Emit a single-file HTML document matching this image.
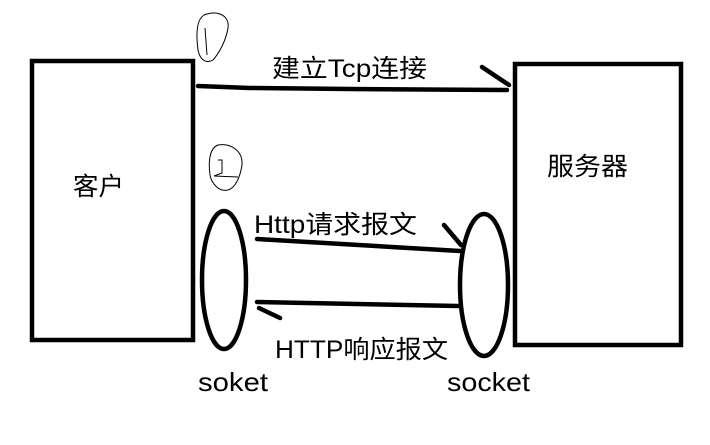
<!DOCTYPE html>
<html><head><meta charset="utf-8"><style>
html,body{margin:0;padding:0;background:#fff;width:710px;height:445px;overflow:hidden}
svg{display:block}
text{font-family:"Liberation Sans","Noto Sans CJK SC",sans-serif;fill:#000}
</style></head><body>
<svg width="710" height="445" viewBox="0 0 710 445">
<g fill="none" stroke="#000" stroke-width="4.5" stroke-linecap="round">
<rect x="32" y="61" width="161" height="279" stroke-linecap="butt"/>
<rect x="515" y="64" width="166" height="281" stroke-linecap="butt"/>
<path d="M198 86 L250 88 L350 89 L507 90"/>
<path d="M482 67 L509 85"/>
<ellipse cx="224" cy="280" rx="22" ry="69"/>
<ellipse cx="484" cy="285" rx="24" ry="71"/>
<path d="M257 239 L460 251"/>
<path d="M444 225 L461 245"/>
<path d="M257 302 L458 306"/>
<path d="M259 308 L280 318"/>
</g>
<g fill="none" stroke="#000" stroke-width="1">
<path d="M204 15 C215 10 230 14 228 28 C226 40 220 52 213 60 C206 64 200 60 198 50 C196 35 196 20 204 15 Z"/>
<path d="M205 28 L207 55"/>
<path d="M218 145 C230 143 243 150 242 165 C240 178 235 188 228 190 C220 192 212 185 210 175 C208 160 210 148 218 145 Z"/>
<path d="M218 160 L222 160 L222 173 L214 176 L238 177"/>
</g>
<text x="272" y="77" font-size="25" textLength="155" lengthAdjust="spacingAndGlyphs">建立Tcp连接</text>
<text x="254" y="233" font-size="25" textLength="163" lengthAdjust="spacingAndGlyphs">Http请求报文</text>
<text x="275" y="358" font-size="25" textLength="173" lengthAdjust="spacingAndGlyphs">HTTP响应报文</text>
<text x="198" y="391" font-size="26" textLength="70" lengthAdjust="spacingAndGlyphs">soket</text>
<text x="447" y="391" font-size="26" textLength="83" lengthAdjust="spacingAndGlyphs">socket</text>
<text x="73" y="195" font-size="25" textLength="51" lengthAdjust="spacingAndGlyphs">客户</text>
<text x="547" y="175" font-size="25" textLength="81" lengthAdjust="spacingAndGlyphs">服务器</text>
</svg>
</body></html>
